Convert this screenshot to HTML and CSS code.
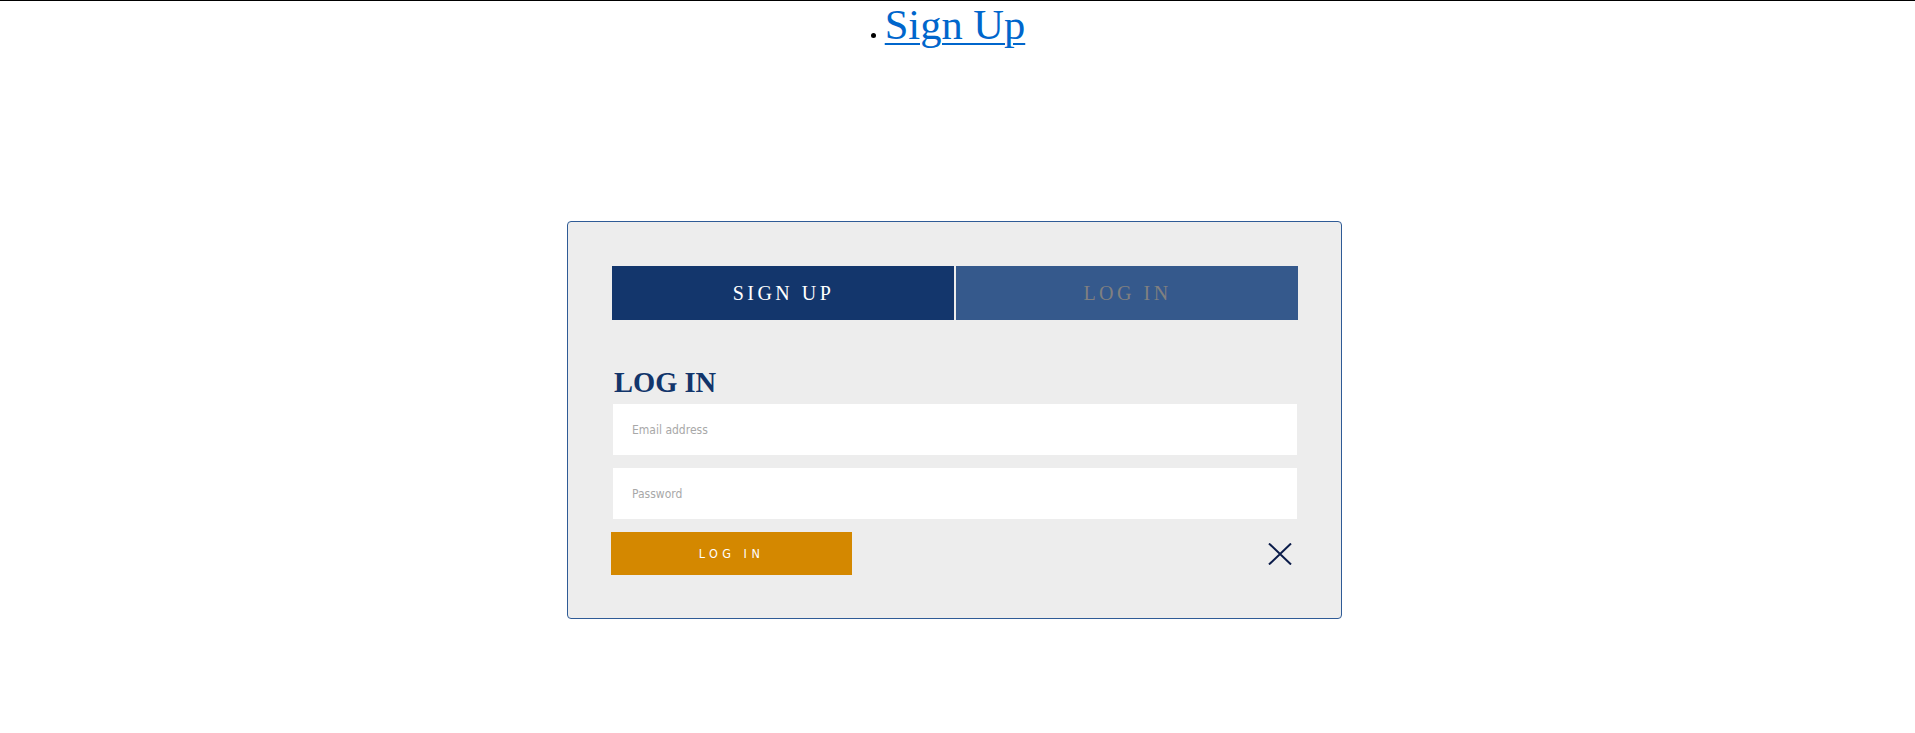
FILE: index.html
```html
<!DOCTYPE html>
<html lang="en">
<head>
<meta charset="utf-8">
<title>Log In</title>
<link rel="stylesheet" href="styles.css">
</head>
<body>
  <header class="topbar">
    <span class="dot"></span>
    <a class="signup-link" href="#">Sign Up</a>
  </header>

  <main class="modal">
    <div class="tabs">
      <button class="tab tab-active">SIGN UP</button>
      <button class="tab tab-inactive">LOG IN</button>
    </div>

    <h2 class="title">LOG IN</h2>

    <form class="form">
      <input class="field" type="email" placeholder="Email address">
      <input class="field" type="password" placeholder="Password">
      <div class="actions">
        <button class="submit" type="button">LOG IN</button>
        <button class="close" type="button" aria-label="Close">
          <svg width="24" height="22" viewBox="0 0 24 22">
            <path d="M1 0.5 L23 21.5 M23 0.5 L1 21.5" stroke="#0b1c4a" stroke-width="2" fill="none"/>
          </svg>
        </button>
      </div>
    </form>
  </main>
</body>
</html>
```

FILE: styles.css
```css
* {
  box-sizing: border-box;
}

html, body {
  margin: 0;
  padding: 0;
  background: #ffffff;
}

body {
  font-family: "Liberation Serif", "Times New Roman", serif;
}

.topbar {
  border-top: 1px solid #000000;
  display: flex;
  justify-content: center;
  align-items: baseline;
  padding-right: 19px;
  height: 49px;
}

.dot {
  display: inline-block;
  width: 5px;
  height: 5px;
  border-radius: 50%;
  background: #000000;
  margin-right: 9px;
  align-self: flex-start;
  margin-top: 32px;
}

.signup-link {
  font-family: "Liberation Serif", "Times New Roman", serif;
  font-size: 42.5px;
  line-height: 48px;
  color: #0066cc;
  text-decoration: underline;
  text-underline-offset: 4px;
  text-decoration-thickness: 2px;
}

.modal {
  width: 775px;
  margin: 172px 0 0 calc(50% - 390.5px);
  background: #ededed;
  border: 1px solid #2f5b96;
  border-radius: 4px;
  padding: 44px 43px 43px 44px;
}

.tabs {
  display: flex;
  gap: 2px;
}

.tab {
  flex: 1;
  height: 54px;
  border: 0;
  margin: 0;
  padding: 0 0 0 1px;
  font-family: "Liberation Serif", "Times New Roman", serif;
  font-size: 20px;
  letter-spacing: 3.5px;
  cursor: pointer;
}

.tab-active {
  background: #13366c;
  color: #ffffff;
}

.tab-inactive {
  background: #35598c;
  color: #808080;
}

.title {
  margin: 47px 0 5px 2px;
  font-family: "Liberation Serif", "Times New Roman", serif;
  font-weight: bold;
  font-size: 28.5px;
  line-height: 32px;
  color: #12356b;
}

.form {
  display: flex;
  flex-direction: column;
  gap: 13px;
}

.field {
  display: block;
  margin: 0 1px;
  height: 51px;
  border: 0;
  background: #ffffff;
  padding: 0 19px;
  font-family: "DejaVu Sans Condensed", "DejaVu Sans", sans-serif;
  font-size: 12px;
  color: #333333;
  outline: none;
}

.field::placeholder {
  color: #a8a8a8;
}

.actions {
  display: flex;
  justify-content: space-between;
  align-items: center;
}

.submit {
  width: 241px;
  height: 43px;
  margin-left: -1px;
  border: 0;
  background: #d48800;
  color: #ffffff;
  font-family: "DejaVu Sans Condensed", "DejaVu Sans", sans-serif;
  font-size: 12.5px;
  letter-spacing: 4.5px;
  padding: 0;
  cursor: pointer;
}

.close {
  border: 0;
  background: transparent;
  padding: 0;
  margin-right: 6px;
  width: 24px;
  height: 22px;
  display: flex;
  cursor: pointer;
}
```
